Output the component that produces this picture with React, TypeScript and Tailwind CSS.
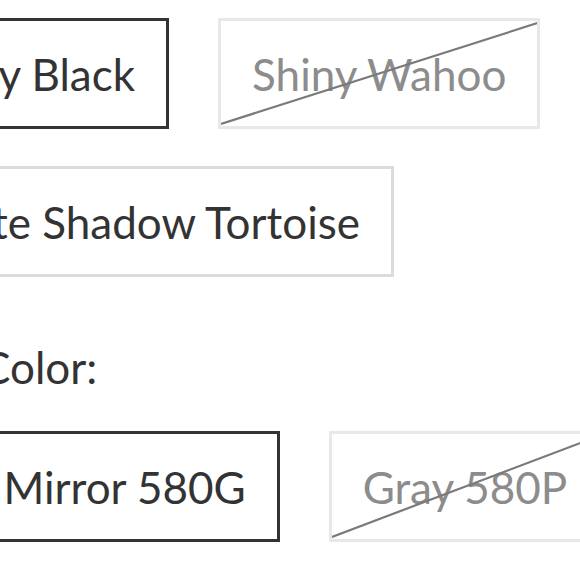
import React from "react";

type Option = { label: string; state: "selected" | "available" | "soldout" };

const frameColors: Option[] = [
  { label: "Shiny Black", state: "selected" },
  { label: "Shiny Wahoo", state: "soldout" },
  { label: "Matte Shadow Tortoise", state: "available" },
];

const lensColors: Option[] = [
  { label: "Blue Mirror 580G", state: "selected" },
  { label: "Gray 580P", state: "soldout" },
];

function Swatch({ option }: { option: Option }) {
  const border =
    option.state === "selected"
      ? "border-[#333333] text-[#333333]"
      : option.state === "available"
        ? "border-[#dcdcdc] text-[#333333]"
        : "border-[#e8e8e8] text-[#8c8c8c]";
  return (
    <button
      className={`relative flex h-[111px] shrink-0 items-center whitespace-nowrap border-[3px] bg-white px-[31px] ${border}`}
    >
      {option.label}
      {option.state === "soldout" && (
        <svg
          className="pointer-events-none absolute inset-0 h-full w-full"
          preserveAspectRatio="none"
          viewBox="0 0 100 100"
        >
          <line x1="0" y1="98" x2="100" y2="2" stroke="#7a7a7a" strokeWidth="2.2" vectorEffect="non-scaling-stroke" />
        </svg>
      )}
    </button>
  );
}

export default function App() {
  return (
    <div className="h-[580px] w-[580px] overflow-hidden bg-white">
      <div
        className="ml-[-118px] pt-[18px] text-[44px] leading-none text-[#333333]"
        style={{ fontFamily: "Lato, 'Noto Sans', sans-serif" }}
      >
        <div className="flex flex-wrap gap-x-[49px] gap-y-[37px] w-[700px]">
          {frameColors.map((o) => (
            <Swatch key={o.label} option={o} />
          ))}
        </div>

        <div className="mt-[68px]">Lens Color:</div>

        <div className="mt-[42px] ml-[-10px] flex gap-x-[49px]">
          {lensColors.map((o) => (
            <Swatch key={o.label} option={o} />
          ))}
        </div>
      </div>
    </div>
  );
}
